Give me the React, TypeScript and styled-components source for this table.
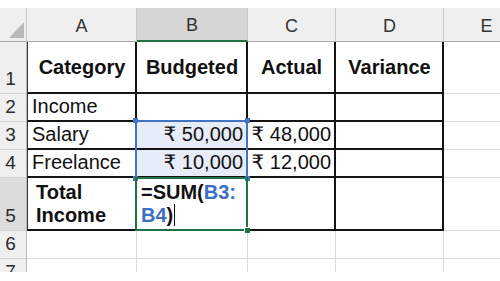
import styled, { createGlobalStyle } from "styled-components";

const GlobalStyle = createGlobalStyle`
  html, body {
    margin: 0;
    padding: 0;
    background: #ffffff;
  }
  body {
    font-family: "Liberation Sans", "DejaVu Sans", "Noto Sans", sans-serif;
  }
`;

// blue cell reference inside a formula
const Ref = styled.span`
  color: #3c6fc4;
`;

const Caret = styled.span`
  display: inline-block;
  width: 1px;
  height: 22px;
  margin-left: 1px;
  vertical-align: -4px;
  background: #111111;
`;

type Align = "left" | "center" | "right";

type CellData = {
  text?: React.ReactNode;
  bold?: boolean;
  align?: Align;
  middle?: boolean;
  indent?: boolean;
  selected?: boolean;
};

type RowData = { n: number; height: number; cells: CellData[] };

const COLS = ["A", "B", "C", "D", "E"];
// row-number gutter, then A..E; E runs past the right edge
const COL_WIDTHS = [27, 110, 111, 88, 108, 86];

const head = (text: string): CellData => ({ text, bold: true, align: "center", middle: true });

const ROWS: RowData[] = [
  { n: 1, height: 52, cells: [head("Category"), head("Budgeted"), head("Actual"), head("Variance"), {}] },
  { n: 2, height: 28, cells: [{ text: "Income" }, {}, {}, {}, {}] },
  {
    n: 3,
    height: 28,
    cells: [
      { text: "Salary" },
      { text: "₹ 50,000", align: "right", selected: true },
      { text: "₹ 48,000", align: "right" },
      {},
      {},
    ],
  },
  {
    n: 4,
    height: 28,
    cells: [
      { text: "Freelance" },
      { text: "₹ 10,000", align: "right", selected: true },
      { text: "₹ 12,000", align: "right" },
      {},
      {},
    ],
  },
  {
    n: 5,
    height: 53,
    cells: [
      { text: "Total Income", bold: true, indent: true },
      {
        text: (
          <>
            =SUM(<Ref>B3:</Ref>
            <br />
            <Ref>B4</Ref>)<Caret />
          </>
        ),
        bold: true,
      },
      {},
      {},
      {},
    ],
  },
  { n: 6, height: 28, cells: [{}, {}, {}, {}, {}] },
  { n: 7, height: 28, cells: [{}, {}, {}, {}, {}] },
];

// the bordered block runs A1:D5
const isBoxed = (row: number, col: number) => row >= 1 && row <= 5 && col <= 3;

// sheet row n sits on grid line n + 1, under the column letters
const gridRowOf = (n: number) => n + 1;

function App() {
  return (
    <>
      <GlobalStyle />
      <Page>
        <Sheet>
          <Corner>
            <svg width="27" height="34" viewBox="0 0 27 34">
              <polygon points="24,14 24,30 9,30" fill="#b9b9b9" />
            </svg>
          </Corner>
          {COLS.map((c, i) => (
            <ColHeader key={c} $col={i + 2} $active={c === "B"}>
              {c}
            </ColHeader>
          ))}

          {ROWS.map((row) => (
            <RowGroup key={row.n} row={row} />
          ))}

          {/* formula reference range B3:B4 */}
          <RefRange $row={gridRowOf(3)}>
            <Handle $x="left" $y="top" />
            <Handle $x="right" $y="top" />
            <Handle $x="left" $y="bottom" />
            <Handle $x="right" $y="bottom" />
          </RefRange>

          {/* cell being edited, B5 */}
          <ActiveCell $row={gridRowOf(5)}>
            <FillHandle />
          </ActiveCell>
        </Sheet>
      </Page>
    </>
  );
}

function RowGroup({ row }: { row: RowData }) {
  const gridRow = gridRowOf(row.n);
  return (
    <>
      <RowHeader $row={gridRow} $active={row.n === 5}>
        {row.n}
      </RowHeader>
      {row.cells.map((cell, i) => (
        <Cell
          key={i}
          $row={gridRow}
          $col={i + 2}
          $boxed={isBoxed(row.n, i)}
          $firstCol={i === 0}
          $bold={!!cell.bold}
          $align={cell.align ?? "left"}
          $middle={!!cell.middle}
          $indent={!!cell.indent}
          $selected={!!cell.selected}
        >
          {cell.text && <CellText $align={cell.align ?? "left"}>{cell.text}</CellText>}
        </Cell>
      ))}
    </>
  );
}

const Page = styled.div`
  padding-top: 8px;
  width: 500px;
  height: 281px;
  box-sizing: border-box;
  background: #ffffff;
  overflow: hidden;
`;

const Sheet = styled.div`
  display: grid;
  grid-template-columns: ${COL_WIDTHS.map((w) => `${w}px`).join(" ")};
  grid-template-rows: 34px ${ROWS.map((r) => `${r.height}px`).join(" ")};
  width: 500px;
  height: 264px;
  overflow: hidden;
  color: #111111;
`;

const Corner = styled.div`
  grid-column: 1;
  grid-row: 1;
  background: #efefef;
  border-right: 1px solid #c4c4c4;
  border-bottom: 1px solid #a8a8a8;
  box-sizing: border-box;
  overflow: hidden;

  svg {
    display: block;
  }
`;

const ColHeader = styled.div<{ $col: number; $active: boolean }>`
  grid-column: ${(p) => p.$col};
  grid-row: 1;
  display: flex;
  align-items: flex-end;
  justify-content: center;
  padding-bottom: 4px;
  box-sizing: border-box;
  font-size: 18px;
  color: #333333;
  background: ${(p) => (p.$active ? "#d6d6d6" : "#efefef")};
  border-right: 1px solid #c9c9c9;
  border-bottom: ${(p) => (p.$active ? "2px solid #217346" : "1px solid #a8a8a8")};
`;

const RowHeader = styled.div<{ $row: number; $active: boolean }>`
  grid-column: 1;
  grid-row: ${(p) => p.$row};
  display: flex;
  align-items: flex-end;
  justify-content: center;
  padding: 0 5px 3px 0;
  box-sizing: border-box;
  font-size: 19px;
  color: #2b2b2b;
  background: ${(p) => (p.$active ? "#dcdcdc" : "#efefef")};
  border-right: 1px solid #b8b8b8;
  border-bottom: 1px solid #d2d2d2;
`;

const Cell = styled.div<{
  $row: number;
  $col: number;
  $boxed: boolean;
  $firstCol: boolean;
  $bold: boolean;
  $align: Align;
  $middle: boolean;
  $indent: boolean;
  $selected: boolean;
}>`
  grid-column: ${(p) => p.$col};
  grid-row: ${(p) => p.$row};
  display: flex;
  align-items: ${(p) => (p.$middle ? "center" : "flex-end")};
  justify-content: ${(p) =>
    p.$align === "center" ? "center" : p.$align === "right" ? "flex-end" : "flex-start"};
  box-sizing: border-box;
  min-width: 0;
  padding: ${(p) => (p.$middle ? "3px" : "0")} 3px 2px ${(p) => (p.$indent ? "8px" : "4px")};
  font-size: 20px;
  line-height: 23px;
  font-weight: ${(p) => (p.$bold ? 700 : 400)};
  background: ${(p) => (p.$selected ? "#e6edf8" : "#ffffff")};
  border-right: ${(p) => (p.$boxed ? "2px solid #141414" : "1px solid #dadada")};
  border-bottom: ${(p) => (p.$boxed ? "2px solid #141414" : "1px solid #dadada")};
  border-left: ${(p) => (p.$boxed && p.$firstCol ? "1px solid #3a3a3a" : "none")};
`;

const CellText = styled.div<{ $align: Align }>`
  text-align: ${(p) => p.$align};
  white-space: ${(p) => (p.$align === "right" ? "nowrap" : "normal")};
`;

const RefRange = styled.div<{ $row: number }>`
  grid-column: 3;
  grid-row: ${(p) => p.$row} / span 2;
  position: relative;
  margin: -2px 0 -1px -2px;
  border: 2px solid #4472c4;
  pointer-events: none;
`;

const Handle = styled.span<{ $x: "left" | "right"; $y: "top" | "bottom" }>`
  position: absolute;
  width: 5px;
  height: 5px;
  background: #4472c4;
  ${(p) => p.$x}: -4px;
  ${(p) => p.$y}: -4px;
`;

const ActiveCell = styled.div<{ $row: number }>`
  grid-column: 3;
  grid-row: ${(p) => p.$row};
  position: relative;
  margin: -1px 0 0 -2px;
  border: 2px solid #217346;
  pointer-events: none;
`;

const FillHandle = styled.span`
  position: absolute;
  right: -4px;
  bottom: -4px;
  width: 6px;
  height: 6px;
  background: #217346;
  border-top: 1px solid #ffffff;
  border-left: 1px solid #ffffff;
  box-sizing: border-box;
`;

export default App;
